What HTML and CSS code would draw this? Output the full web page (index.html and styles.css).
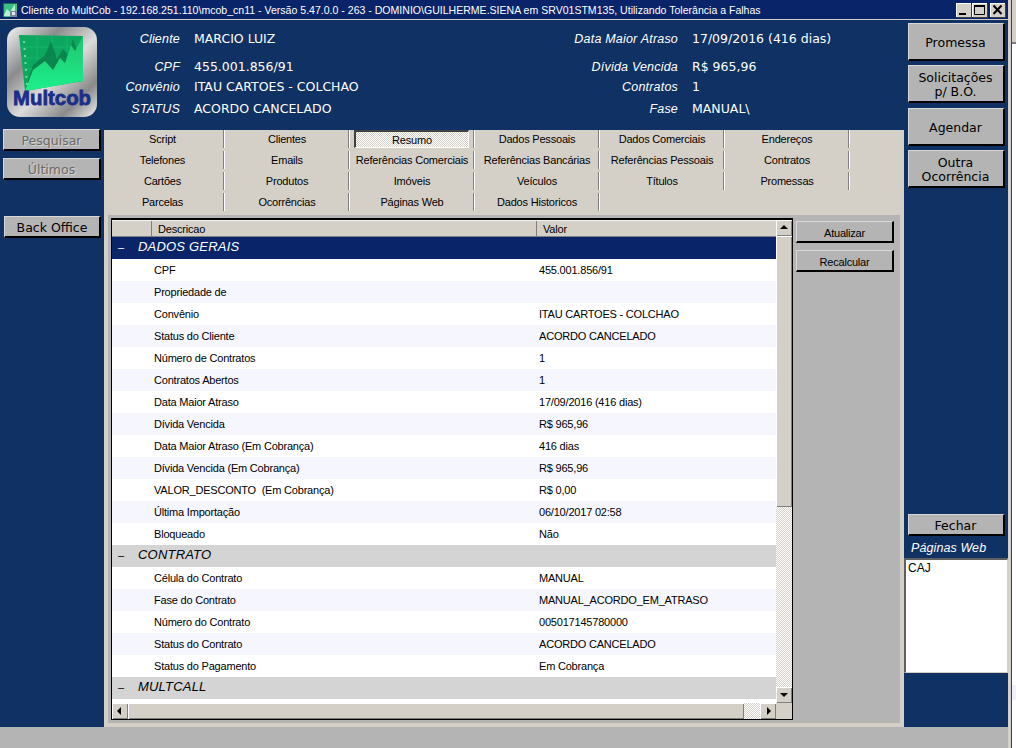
FILE: index.html
```html
<!DOCTYPE html>
<html lang="en">
<head>
    <meta charset="UTF-8">
    <title>Cliente do MultCob</title>
    <link rel="stylesheet" href="styles.css">
</head>
<body>
    <div class="window">
        <div class="titlebar">
            <svg class="title-icon" width="14" height="14" viewBox="0 0 14 14">
                <rect width="14" height="14" fill="#3cc088"/>
                <path d="M1 12L4 6L7 9L12 1V13H1Z" fill="#b8f0d4"/>
                <path d="M0 0H14V1H1V14H0Z" fill="#1a6a48"/>
                <rect x="7" y="8" width="7" height="6" fill="#7a8498"/>
                <rect x="9" y="9" width="3" height="3" fill="#e4e8f0"/>
            </svg>
            <span class="title-text">Cliente do MultCob - 192.168.251.110\mcob_cn11 - Versão 5.47.0.0 - 263 - DOMINIO\GUILHERME.SIENA em SRV01STM135, Utilizando Tolerância a Falhas</span>
            <div class="title-buttons">
                <div class="title-btn"><svg width="15" height="14" viewBox="0 0 15 14"><rect x="3" y="10" width="7" height="2" fill="#000"/></svg></div>
                <div class="title-btn"><svg width="15" height="14" viewBox="0 0 15 14"><path d="M2.5 2.5H12.5V11.5H2.5Z" fill="none" stroke="#000"/><rect x="2" y="2" width="11" height="2" fill="#000"/></svg></div>
                <div class="title-btn close"><svg width="15" height="14" viewBox="0 0 15 14"><path d="M3.5 2.5L11.5 11M11.5 2.5L3.5 11" stroke="#000" stroke-width="2" fill="none"/></svg></div>
            </div>
        </div>

        <div class="body">
            <div class="main">
                <div class="header">
                    <svg class="logo" width="90" height="90" viewBox="0 0 90 90">
                        <defs>
                            <linearGradient id="metal" x1="0" y1="0" x2="1" y2="1">
                                <stop offset="0" stop-color="#f4f4f4"/>
                                <stop offset="0.3" stop-color="#8c8c8c"/>
                                <stop offset="0.55" stop-color="#dcdcdc"/>
                                <stop offset="0.8" stop-color="#8a8a8a"/>
                                <stop offset="1" stop-color="#f0f0f0"/>
                            </linearGradient>
                            <linearGradient id="peak" x1="0" y1="0" x2="0" y2="1">
                                <stop offset="0" stop-color="#1fc46e"/>
                                <stop offset="1" stop-color="#1cf08c"/>
                            </linearGradient>
                        </defs>
                        <rect width="90" height="90" rx="13" fill="url(#metal)"/>
                        <path d="M12 8L76 9V54L18 64Z" fill="#0ca860"/>
                        <path d="M14 20H76M15 31H76M16 42H76M30 9V60M45 9V58M60 9V56" stroke="#18b46e" stroke-width="1" fill="none"/>
                        <path d="M19 60L26 38L38 28L44 14L50 32L56 22L62 28L66 12L72 30L76 28V54Z" fill="#0a7a48" opacity="0.75"/>
                        <path d="M18 64L26 43L38 34L46 43L53 31L58 36L64 18L68 24L76 9V54Z" fill="url(#peak)"/>
                        <path d="M17 14L20 58" stroke="#6fdca4" stroke-width="2" stroke-dasharray="2 5" fill="none"/>
                        <text x="6" y="78" class="logo-text" textLength="78" lengthAdjust="spacingAndGlyphs">Multcob</text>
                    </svg>
                    <div class="info info-left">
                        <span class="info-label">Cliente</span><span class="info-value">MARCIO LUIZ</span>
                        <span class="info-label">CPF</span><span class="info-value">455.001.856/91</span>
                        <span class="info-label">Convênio</span><span class="info-value">ITAU CARTOES - COLCHAO</span>
                        <span class="info-label">STATUS</span><span class="info-value">ACORDO CANCELADO</span>
                    </div>
                    <div class="info info-right">
                        <span class="info-label">Data Maior Atraso</span><span class="info-value">17/09/2016 (416 dias)</span>
                        <span class="info-label">Dívida Vencida</span><span class="info-value">R$ 965,96</span>
                        <span class="info-label">Contratos</span><span class="info-value">1</span>
                        <span class="info-label">Fase</span><span class="info-value">MANUAL\</span>
                    </div>
                </div>

                <div class="content">
                    <div class="left-nav">
                        <div class="btn btn-nav disabled">Pesquisar</div>
                        <div class="btn btn-nav disabled">Últimos</div>
                        <div class="btn btn-nav back-office">Back Office</div>
                    </div>

                    <div class="workspace">
                        <div class="tabs">
                            <div class="tab">Script</div>
                            <div class="tab">Clientes</div>
                            <div class="tab active"><span>Resumo</span></div>
                            <div class="tab">Dados Pessoais</div>
                            <div class="tab">Dados Comerciais</div>
                            <div class="tab">Endereços</div>
                            <div class="tab">Telefones</div>
                            <div class="tab">Emails</div>
                            <div class="tab">Referências Comerciais</div>
                            <div class="tab">Referências Bancárias</div>
                            <div class="tab">Referências Pessoais</div>
                            <div class="tab">Contratos</div>
                            <div class="tab">Cartões</div>
                            <div class="tab">Produtos</div>
                            <div class="tab">Imóveis</div>
                            <div class="tab">Veículos</div>
                            <div class="tab">Títulos</div>
                            <div class="tab">Promessas</div>
                            <div class="tab">Parcelas</div>
                            <div class="tab">Ocorrências</div>
                            <div class="tab">Páginas Web</div>
                            <div class="tab">Dados Historicos</div>
                        </div>

                        <div class="panel">
                            <div class="grid">
                                <div class="grid-view">
                                    <div class="grid-head">
                                        <div class="head-cell head-first"></div>
                                        <div class="head-cell head-desc">Descricao</div>
                                        <div class="head-cell head-val">Valor</div>
                                    </div>
                                    <div class="group selected"><span class="group-sign">–</span>DADOS GERAIS</div>
                                    <div class="row"><span class="desc">CPF</span><span>455.001.856/91</span></div>
                                    <div class="row"><span class="desc">Propriedade de</span><span></span></div>
                                    <div class="row"><span class="desc">Convênio</span><span>ITAU CARTOES - COLCHAO</span></div>
                                    <div class="row"><span class="desc">Status do Cliente</span><span>ACORDO CANCELADO</span></div>
                                    <div class="row"><span class="desc">Número de Contratos</span><span>1</span></div>
                                    <div class="row"><span class="desc">Contratos Abertos</span><span>1</span></div>
                                    <div class="row"><span class="desc">Data Maior Atraso</span><span>17/09/2016 (416 dias)</span></div>
                                    <div class="row"><span class="desc">Dívida Vencida</span><span>R$ 965,96</span></div>
                                    <div class="row"><span class="desc">Data Maior Atraso (Em Cobrança)</span><span>416 dias</span></div>
                                    <div class="row"><span class="desc">Dívida Vencida (Em Cobrança)</span><span>R$ 965,96</span></div>
                                    <div class="row"><span class="desc">VALOR_DESCONTO  (Em Cobrança)</span><span>R$ 0,00</span></div>
                                    <div class="row"><span class="desc">Última Importação</span><span>06/10/2017 02:58</span></div>
                                    <div class="row"><span class="desc">Bloqueado</span><span>Não</span></div>
                                    <div class="group"><span class="group-sign">–</span>CONTRATO</div>
                                    <div class="row"><span class="desc">Célula do Contrato</span><span>MANUAL</span></div>
                                    <div class="row"><span class="desc">Fase do Contrato</span><span>MANUAL_ACORDO_EM_ATRASO</span></div>
                                    <div class="row"><span class="desc">Número do Contrato</span><span>005017145780000</span></div>
                                    <div class="row"><span class="desc">Status do Contrato</span><span>ACORDO CANCELADO</span></div>
                                    <div class="row"><span class="desc">Status do Pagamento</span><span>Em Cobrança</span></div>
                                    <div class="group"><span class="group-sign">–</span>MULTCALL</div>
                                </div>
                                <div class="vscroll">
                                    <div class="sb-btn"><svg width="16" height="16" viewBox="0 0 16 16"><path d="M8 5L12 9H4Z" fill="#000"/></svg></div>
                                    <div class="sb-thumb vthumb"></div>
                                    <div class="sb-track"></div>
                                    <div class="sb-btn"><svg width="16" height="16" viewBox="0 0 16 16"><path d="M8 10L12 6H4Z" fill="#000"/></svg></div>
                                </div>
                                <div class="hscroll">
                                    <div class="sb-btn"><svg width="16" height="16" viewBox="0 0 16 16"><path d="M5 8L9 4V12Z" fill="#000"/></svg></div>
                                    <div class="sb-thumb hthumb"></div>
                                    <div class="sb-track"></div>
                                    <div class="sb-btn"><svg width="16" height="16" viewBox="0 0 16 16"><path d="M11 8L7 4V12Z" fill="#000"/></svg></div>
                                </div>
                                <div class="sb-corner"></div>
                            </div>
                            <div class="panel-actions">
                                <div class="btn btn-action">Atualizar</div>
                                <div class="btn btn-action">Recalcular</div>
                            </div>
                        </div>
                    </div>
                </div>
            </div>

            <div class="side">
                <div class="btn btn-side">Promessa</div>
                <div class="btn btn-side">Solicitações<br>p/ B.O.</div>
                <div class="btn btn-side">Agendar</div>
                <div class="btn btn-side">Outra<br>Ocorrência</div>
                <div class="btn btn-close">Fechar</div>
                <div class="side-title">Páginas Web</div>
                <div class="web-list">CAJ</div>
            </div>
        </div>

        <div class="statusbar"></div>
    </div>
    <div class="back-window">
        <div class="back-top"></div>
        <div class="back-row"></div>
    </div>
</body>
</html>
```

FILE: styles.css
```css
body {
    margin: 0;
    width: 1016px;
    height: 748px;
    overflow: hidden;
    display: flex;
    font-family: "Liberation Sans", Arial, sans-serif;
    font-size: 11px;
    letter-spacing: -0.2px;
    color: #000;
    background-color: #fff;
}

.window {
    width: 1008px;
    height: 748px;
    display: flex;
    flex-direction: column;
    flex-shrink: 0;
    border-right: 3px solid #d4d0c8;
    box-shadow: 1px 0 0 #404040;
}

.titlebar {
    height: 19px;
    display: flex;
    align-items: center;
    background-color: #0a246a;
    border-bottom: 1px solid #d4d0c8;
    color: #fff;
    font-size: 10.55px;
    letter-spacing: 0;
    flex-shrink: 0;
}

.title-icon {
    margin-left: 3px;
    margin-right: 4px;
}

.title-text {
    white-space: nowrap;
}

.title-buttons {
    margin-left: auto;
    margin-right: 3px;
    display: flex;
}

.title-btn {
    width: 15px;
    height: 14px;
    margin-left: 1px;
    box-sizing: border-box;
    background-color: #d4d0c8;
    border-top: 1px solid #fff;
    border-left: 1px solid #fff;
    box-shadow: 1px 1px 0 #404040;
    overflow: hidden;
}

.title-btn svg {
    display: block;
    margin: -1px 0 0 -1px;
}

.title-btn.close {
    margin-left: 3px;
}

.body {
    height: 707px;
    display: flex;
    flex-shrink: 0;
}

.main {
    width: 904px;
    display: flex;
    flex-direction: column;
}

.header {
    height: 109px;
    display: flex;
    background-color: #103163;
    color: #fff;
    flex-shrink: 0;
}

.logo {
    margin: 7px 0 0 7px;
    flex-shrink: 0;
}

.logo-text {
    font-family: "Liberation Sans", Arial, sans-serif;
    font-weight: bold;
    font-size: 21px;
    letter-spacing: 0;
    fill: #1a2f8a;
    stroke: #1a2f8a;
    stroke-width: 0.8px;
}

.info {
    display: grid;
    grid-template-rows: 28px 20px 22px 20px;
    column-gap: 14px;
    padding-top: 9px;
    line-height: 20px;
    white-space: nowrap;
}

.info-left {
    width: 440px;
    grid-template-columns: 83px 1fr;
}

.info-right {
    width: 367px;
    grid-template-columns: 141px 1fr;
}

.info-label {
    font-size: 12.5px;
    letter-spacing: 0.2px;
    font-style: italic;
    text-align: right;
}

.info-value {
    font-family: "DejaVu Sans", sans-serif;
    font-size: 12.5px;
    letter-spacing: 0;
}

.content {
    flex: 1;
    display: flex;
    min-height: 0;
}

.left-nav {
    width: 104px;
    flex-shrink: 0;
    background-color: #103163;
    display: flex;
    flex-direction: column;
    box-sizing: border-box;
    padding-left: 3px;
}

.btn {
    background-color: #b4b4b4;
    border-top: 1px solid #d8d8d8;
    border-left: 1px solid #d8d8d8;
    border-right: 2px solid #000;
    border-bottom: 2px solid #000;
    box-sizing: border-box;
    display: flex;
    align-items: center;
    justify-content: center;
    text-align: center;
    line-height: 14px;
    padding-top: 2px;
}

.btn-nav {
    width: 98px;
    height: 22px;
    margin-bottom: 7px;
    font-family: "DejaVu Sans", sans-serif;
    font-size: 12.5px;
    letter-spacing: 0;
}

.btn-nav.disabled {
    color: #6a6a6a;
    text-shadow: 1px 1px 0 #d4d4d4;
}

.back-office {
    margin-top: 29px;
    margin-left: 1px;
    width: 97px;
}

.workspace {
    flex: 1;
    display: flex;
    flex-direction: column;
    padding-top: 1px;
    background-color: #103163;
    min-width: 0;
}

.tabs {
    height: 85px;
    flex-shrink: 0;
    box-sizing: border-box;
    background-color: #d4d0c8;
    display: grid;
    grid-template-columns: 121px repeat(5, 125px);
    grid-auto-rows: 18px;
    row-gap: 3px;
    align-content: start;
}

.tab {
    display: flex;
    align-items: center;
    justify-content: center;
    border-right: 1px solid #fff;
    box-shadow: inset -1px 0 0 #808080;
    white-space: nowrap;
    padding-bottom: 1px;
    box-sizing: border-box;
}

.tab:nth-child(6n+1) {
    padding-right: 3px;
}

.tab.active {
    position: relative;
}

.tab.active::before {
    content: "";
    position: absolute;
    left: 4px;
    right: 5px;
    top: 0;
    bottom: 0;
    border-top: 2px solid #404040;
    border-left: 2px solid #404040;
    border-right: 1px solid #fff;
    border-bottom: 1px solid #fff;
    background: repeating-conic-gradient(#fff 0 25%, #d4d0c8 0 50%) 0 0 / 2px 2px;
}

.tab.active span {
    position: relative;
    top: 1px;
}

.panel {
    flex: 1;
    display: flex;
    min-height: 0;
    background-color: #b4b4b4;
    border-left: 4px solid #d4d0c8;
    border-right: 4px solid #d4d0c8;
    border-bottom: 4px solid #d4d0c8;
    padding-left: 3px;
    padding-top: 3px;
    box-sizing: border-box;
}

.grid {
    width: 682px;
    height: 502px;
    box-sizing: border-box;
    flex-shrink: 0;
    border: 1px solid #000;
    border-top-width: 2px;
    display: grid;
    grid-template-columns: 664px 16px;
    grid-template-rows: 483px 16px;
    background-color: #d4d0c8;
}

.grid-view {
    background-color: #fff;
    overflow: hidden;
}

.grid-head {
    height: 17px;
    display: flex;
    background-color: #d4d0c8;
    border-top: 1px solid #f4f4f0;
    box-sizing: border-box;
    border-bottom: 1px solid #808080;
    line-height: 16px;
}

.head-cell {
    box-sizing: border-box;
    padding-left: 6px;
}

.head-first {
    width: 40px;
    border-right: 1px solid #808080;
}

.head-desc {
    width: 385px;
    border-right: 1px solid #808080;
}

.group {
    height: 22px;
    line-height: 20px;
    font-size: 13px;
    letter-spacing: 0.2px;
    font-style: italic;
    background-color: #d4d4d4;
    white-space: nowrap;
}

.group.selected {
    background-color: #0a246a;
    color: #fff;
}

.group-sign {
    display: inline-block;
    width: 20px;
    margin-left: 6px;
    font-size: 11px;
    font-style: normal;
}

.row {
    height: 22px;
    line-height: 22px;
    display: flex;
    white-space: pre;
    background-color: #fff;
}

.row:nth-child(even) {
    background-color: #f6f6ff;
}

.desc {
    width: 385px;
    margin-left: 42px;
    flex-shrink: 0;
}

.vscroll {
    display: flex;
    flex-direction: column;
}

.hscroll {
    display: flex;
}

.sb-btn {
    width: 16px;
    height: 16px;
    flex-shrink: 0;
    background-color: #d4d0c8;
    box-sizing: border-box;
    border-top: 1px solid #fff;
    border-left: 1px solid #fff;
    box-shadow: inset -1px -1px 0 #808080;
}

.sb-btn svg {
    display: block;
    margin: -1px 0 0 -1px;
}

.sb-thumb {
    background-color: #d4d0c8;
    box-sizing: border-box;
    border-top: 1px solid #fff;
    border-left: 1px solid #fff;
    box-shadow: inset -1px -1px 0 #808080;
    flex-shrink: 0;
}

.vthumb {
    height: 271px;
}

.hthumb {
    width: 616px;
}

.sb-track {
    flex: 1;
    background: repeating-conic-gradient(#fff 0 25%, #d4d0c8 0 50%) 0 0 / 2px 2px;
}

.sb-corner {
    background-color: #d4d0c8;
}

.panel-actions {
    margin-left: 3px;
    padding-top: 3px;
    display: flex;
    flex-direction: column;
    gap: 7px;
}

.btn-action {
    width: 98px;
    height: 22px;
}

.side {
    width: 104px;
    flex-shrink: 0;
    background-color: #103163;
    display: flex;
    flex-direction: column;
    align-items: center;
    font-family: "DejaVu Sans", sans-serif;
    letter-spacing: 0;
}

.btn-side {
    width: 97px;
    height: 38px;
    margin-top: 4px;
    font-size: 12.5px;
}

.btn-side:first-child {
    margin-top: 3px;
}

.btn-side:nth-child(3) {
    margin-top: 5px;
}

.btn-close {
    width: 97px;
    height: 22px;
    margin-top: 326px;
    font-size: 12.5px;
}

.side-title {
    align-self: flex-start;
    margin: 3px 0 0 7px;
    height: 19px;
    line-height: 18px;
    color: #fff;
    font-family: "Liberation Sans", Arial, sans-serif;
    font-style: italic;
    font-size: 12.5px;
    letter-spacing: 0.1px;
}

.web-list {
    width: 104px;
    height: 115px;
    box-sizing: border-box;
    background-color: #fff;
    border-top: 2px solid #606060;
    border-left: 2px solid #606060;
    border-right: 1px solid #d4d0c8;
    border-bottom: 1px solid #d4d0c8;
    padding: 1px 2px;
    line-height: 14px;
    font-family: "Liberation Sans", Arial, sans-serif;
    font-size: 12px;
}

.statusbar {
    flex: 1;
    background-color: #b4b4b4;
}

.back-window {
    flex: 1;
    margin-left: 1px;
    display: flex;
    flex-direction: column;
}

.back-top {
    height: 42px;
    background-color: #d4d0c8;
    border-bottom: 2px solid #808080;
}

.back-row {
    height: 15px;
    margin-top: 641px;
    background-color: #f0f0ff;
}
```
